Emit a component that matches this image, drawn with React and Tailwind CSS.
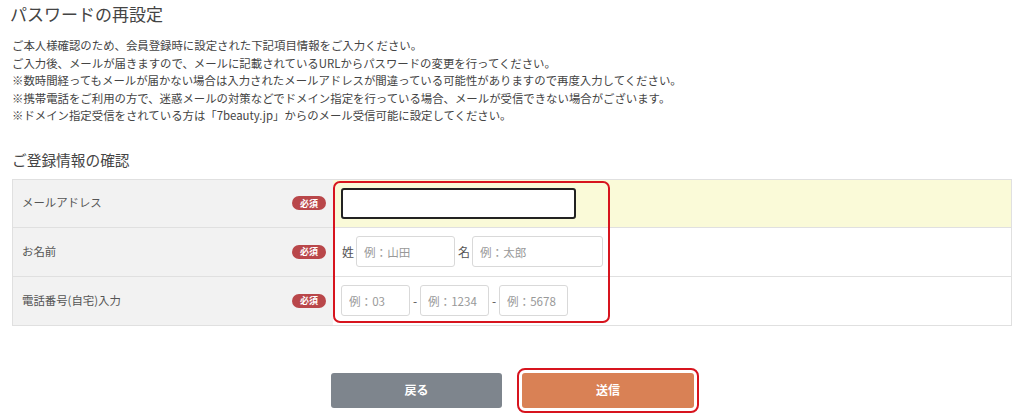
import React from "react";

const font = { fontFamily: '"Noto Sans CJK JP", "Noto Sans", sans-serif' };

function Badge() {
  return (
    <span className="inline-flex items-center justify-center w-[34px] h-[14px] rounded-full bg-[#b9474a] text-white text-[9px] font-bold leading-none">
      必須
    </span>
  );
}

function Label({ children }) {
  return (
    <div className="w-[320px] shrink-0 bg-[#f2f2f2] flex items-center justify-between pl-[9px] pr-[7px] text-[11.4px] text-[#555]">
      <span>{children}</span>
      <Badge />
    </div>
  );
}

function Field({ w, ph }) {
  return (
    <input
      readOnly
      placeholder={ph}
      className={`${w} h-[31px] border border-[#d9d9d9] rounded-[3px] bg-white px-[7px] text-[11.6px] text-[#333] placeholder:text-[#999] outline-none`}
      style={font}
    />
  );
}

export default function App() {
  return (
    <div className="bg-white w-[1020px] h-[413px] overflow-hidden text-[#444]" style={font}>
      <h1 className="pl-[10px] pt-[4px] text-[17px] leading-[20px] font-normal text-[#444]">パスワードの再設定</h1>
      <div className="pl-[12px] mt-[13px] text-[11.4px] leading-[17.5px] text-[#444]">
        <p>ご本人様確認のため、会員登録時に設定された下記項目情報をご入力ください。</p>
        <p>ご入力後、メールが届きますので、メールに記載されているURLからパスワードの変更を行ってください。</p>
        <p>※数時間経ってもメールが届かない場合は入力されたメールアドレスが間違っている可能性がありますので再度入力してください。</p>
        <p>※携帯電話をご利用の方で、迷惑メールの対策などでドメイン指定を行っている場合、メールが受信できない場合がございます。</p>
        <p>※ドメイン指定受信をされている方は「7beauty.jp」からのメール受信可能に設定してください。</p>
      </div>
      <h2 className="pl-[12px] mt-[25px] text-[14.7px] leading-[20px] font-normal text-[#444]">ご登録情報の確認</h2>
      <div className="relative ml-[12px] mt-[9px] w-[1000px] border border-[#e0e0e0]">
        <div className="flex h-[48px] border-b border-[#e0e0e0]">
          <Label>メールアドレス</Label>
          <div className="flex-1 bg-[#fafad8] flex items-center pl-[8px]">
            <div className="w-[235px] h-[31px] border-2 border-[#222] rounded-[3px] bg-white" />
          </div>
        </div>
        <div className="flex h-[49px] border-b border-[#e0e0e0]">
          <Label>お名前</Label>
          <div className="flex-1 bg-white flex items-center pl-[9px] text-[12px] text-[#555]">
            <span className="w-[14px]">姓</span>
            <Field w="w-[99px]" ph="例：山田" />
            <span className="w-[17px] pl-[3px]">名</span>
            <Field w="w-[131px]" ph="例：太郎" />
          </div>
        </div>
        <div className="flex h-[48px]">
          <Label>電話番号(自宅)入力</Label>
          <div className="flex-1 bg-white flex items-center pl-[8px] text-[12px] text-[#555]">
            <Field w="w-[69px]" ph="例：03" />
            <span className="w-[10px] text-center">-</span>
            <Field w="w-[69px]" ph="例：1234" />
            <span className="w-[10px] text-center">-</span>
            <Field w="w-[69px]" ph="例：5678" />
          </div>
        </div>
        <div className="absolute left-[320px] top-[1px] w-[277px] h-[142px] border-2 border-[#d7141e] rounded-[7px] pointer-events-none" />
      </div>
      <div className="flex justify-center gap-[20px] mt-[47px] pl-[5px]">
        <button className="w-[171px] h-[35px] rounded-[3px] bg-[#7e858d] text-white text-[12px] font-bold" style={font}>戻る</button>
        <button className="w-[172px] h-[35px] rounded-[3px] bg-[#d98155] text-white text-[12px] font-bold outline-2 outline-solid outline-[#d7141e] outline-offset-[3px]" style={font}>送信</button>
      </div>
    </div>
  );
}
